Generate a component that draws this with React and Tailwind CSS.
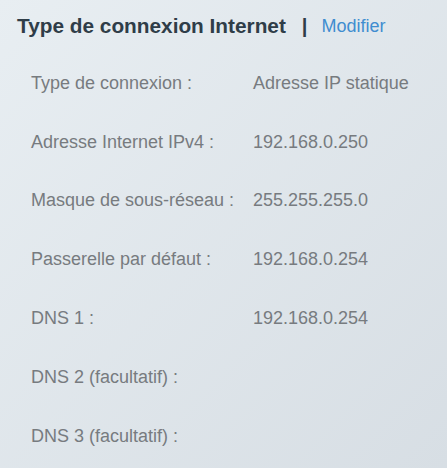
const ROWS = [
  { label: 'Type de connexion :', value: 'Adresse IP statique' },
  { label: 'Adresse Internet IPv4 :', value: '192.168.0.250' },
  { label: 'Masque de sous-réseau :', value: '255.255.255.0' },
  { label: 'Passerelle par défaut :', value: '192.168.0.254' },
  { label: 'DNS 1 :', value: '192.168.0.254' },
  { label: 'DNS 2 (facultatif) :', value: '' },
  { label: 'DNS 3 (facultatif) :', value: '' },
]

export default function App() {
  return (
    <div
      className="w-[447px] h-[468px] overflow-hidden bg-gradient-to-br from-[#e8eef2] to-[#d7dee4] pl-[17px] pt-[14px]"
      style={{ fontFamily: '"Liberation Sans", Arial, sans-serif' }}
    >
      {/* Header */}
      <div className="flex items-center h-[24px]">
        <span className="text-[20.8px] font-bold text-[#2f3d48]">Type de connexion Internet</span>
        <span className="ml-[16px] text-[20px] font-bold text-[#2f3d48]">|</span>
        <span className="ml-[14px] text-[18px] text-[#3f8dd0]">Modifier</span>
      </div>

      {/* Rows */}
      <div className="pl-[14px] pt-[16px] flex flex-col">
        {ROWS.map(({ label, value }) => (
          <div key={label} className="flex items-center h-[58.8px] text-[18px] text-[#777b7f]">
            <span className="w-[222px] shrink-0">{label}</span>
            <span>{value}</span>
          </div>
        ))}
      </div>
    </div>
  )
}
